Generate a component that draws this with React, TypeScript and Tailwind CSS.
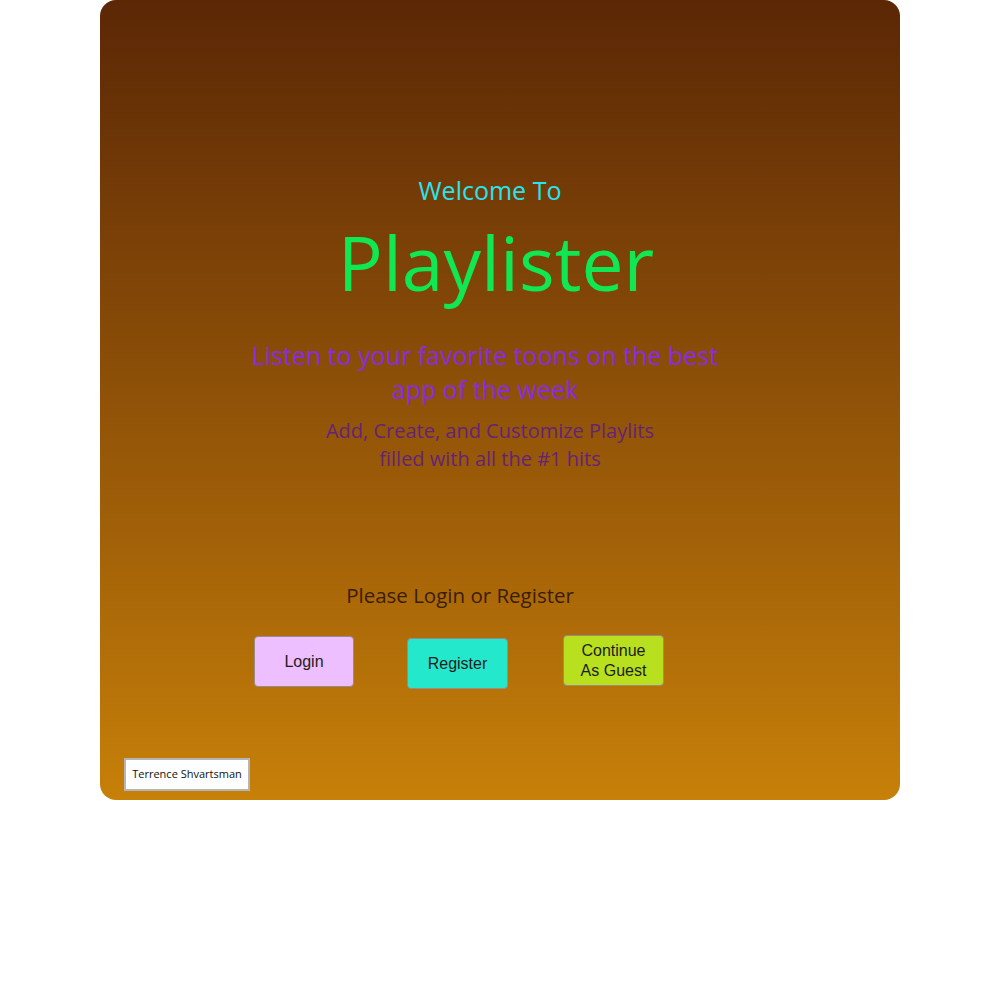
import React from "react";

export default function App() {
  const seg = { fontFamily: '"Open Sans", "Noto Sans", sans-serif' };
  return (
    <div className="w-full min-h-[1000px] bg-white">
      <div
        className="mx-auto w-[800px] h-[800px] rounded-[16px] bg-gradient-to-b from-[#5b2705] to-[#c78008] flex flex-col items-center"
        style={seg}
      >
        <div className="mt-[174px] pr-[20px] text-[25px] leading-[32px] text-[#2ae3ee]">Welcome To</div>
        <div className="mt-[6px] pr-[8px] text-[75px] leading-[100px] text-[#0fe753]">Playlister</div>
        <div className="mt-[26px] pr-[30px] w-[520px] text-center text-[25px] leading-[34px] text-[#8a2be2]">
          Listen to your favorite toons on the best app of the week
        </div>
        <div className="mt-[11px] pr-[20px] text-center text-[20px] leading-[28px] text-[#652377]">
          Add, Create, and Customize Playlits
          <br />
          filled with all the #1 hits
        </div>
        <div className="mt-[108px] pr-[80px] text-[20.5px] leading-[28px] text-[#3a1d05]">Please Login or Register</div>
        <div className="mt-[26px] w-full flex items-start pl-[154px]" style={{ fontFamily: '"Liberation Sans", Arial, sans-serif' }}>
          <button className="mt-[1px] w-[100px] h-[51px] rounded-[4px] border border-[#9a8a8a] bg-[#eebfff] text-[16px] text-[#1c1c1c] leading-[20px]">
            Login
          </button>
          <button className="ml-[53px] mt-[3px] w-[101px] h-[51px] rounded-[4px] border border-[#9a8a8a] bg-[#24e8cc] text-[16px] text-[#1c1c1c] leading-[20px]">
            Register
          </button>
          <button className="ml-[55px] w-[101px] h-[51px] rounded-[4px] border border-[#9a8a8a] bg-[#b8e01e] text-[16px] text-[#1c1c1c] leading-[20px]">
            Continue
            <br />
            As Guest
          </button>
        </div>
        <div className="mt-auto mb-[9px] ml-[24px] self-start w-[126px] h-[33px] bg-white border-2 border-[#b5b5b5] flex items-center justify-center text-[11px] text-[#111]">
          Terrence Shvartsman
        </div>
      </div>
    </div>
  );
}
